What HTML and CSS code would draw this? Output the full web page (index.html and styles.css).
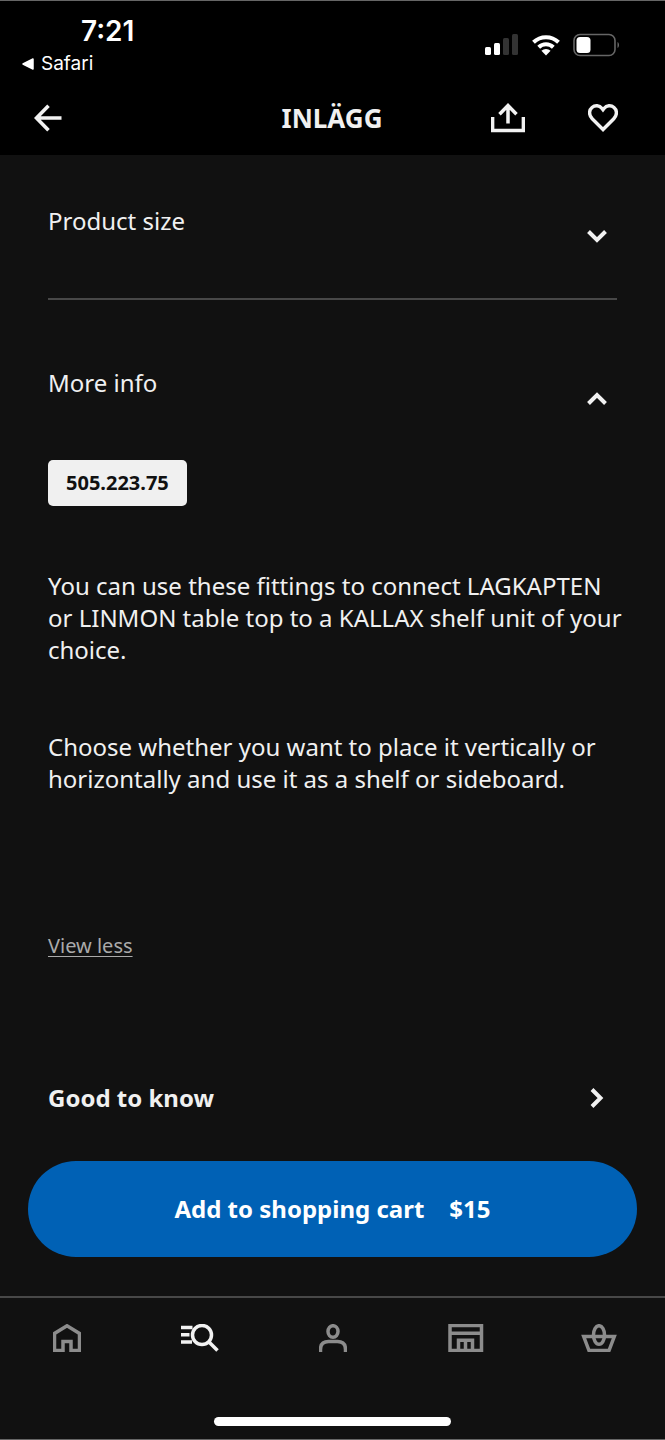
FILE: index.html
```html
<!DOCTYPE html>
<html lang="en">
<head>
<meta charset="utf-8">
<meta name="viewport" content="width=device-width, initial-scale=1">
<title>INLÄGG</title>
<link rel="stylesheet" href="styles.css">
</head>
<body>
<div class="app">
  <header class="top">
    <div class="status">
      <div class="status-left">
        <time class="clock">7:21</time>
        <a class="back-app" href="#">
          <svg width="12" height="12" viewBox="0 0 12 12" aria-hidden="true"><path d="M11 1v10L1 6z" fill="#fff" stroke="#fff" stroke-width="1.5" stroke-linejoin="round"/></svg>
          Safari
        </a>
      </div>
      <div class="status-icons" aria-hidden="true">
        <svg width="34" height="22" viewBox="0 0 34 22"><g fill="#fff"><rect x="0" y="13" width="6" height="8" rx="1.5"/><rect x="9" y="9" width="6" height="12" rx="1.5"/></g><g fill="#333"><rect x="18" y="4" width="6" height="17" rx="1.5"/><rect x="27" y="0" width="6" height="21" rx="1.5"/></g></svg>
        <svg width="28" height="22" viewBox="0 0 28 22"><g fill="none" stroke="#fff" stroke-width="4"><path d="M1.5 8.2a18 18 0 0 1 25 0"/><path d="M6.7 13.3a10.5 10.5 0 0 1 14.6 0"/></g><path d="M14 21.5l-4.6-4.7a7 7 0 0 1 9.2 0z" fill="#fff"/></svg>
        <svg width="47" height="24" viewBox="0 0 47 24"><rect x="1" y="1.500" width="41" height="21" rx="6" fill="none" stroke="#666" stroke-width="1.600"/><rect x="3.500" y="4" width="14" height="16" rx="3.500" fill="#fff"/><path d="M44.500 9c2 1 2 5 0 6z" fill="#666"/></svg>
      </div>
    </div>
    <nav class="bar">
      <button class="icon-btn" aria-label="Back"><svg width="28" height="28" viewBox="0 0 28 28"><path d="M27.500 14H3M14.500 1.800L2.500 14l12 12.200" fill="none" stroke="#f2f2f2" stroke-width="3.600"/></svg></button>
      <h1 class="title">INLÄGG</h1>
      <div class="bar-actions">
        <button class="icon-btn" aria-label="Share"><svg width="34" height="30" viewBox="0 0 34 30"><path d="M1.600 14v13.400h30.800V14M17 20.500V3M8.500 11.200L17 2.500l8.500 8.700" fill="none" stroke="#f2f2f2" stroke-width="3.500"/></svg></button>
        <button class="icon-btn" aria-label="Add to favourites"><svg width="30" height="28" viewBox="0 0 30 28"><path d="M15 25.500L4.200 14.800C.5 11 1 6 4 3.500c3-2.600 7.500-2.200 9.800.8L15 5.800l1.200-1.500c2.300-3 6.800-3.400 9.800-.8 3 2.500 3.500 7.500-.2 11.300z" fill="none" stroke="#f2f2f2" stroke-width="3.400"/></svg></button>
      </div>
    </nav>
  </header>

  <main class="content">
    <section class="panel divided">
      <button class="panel-head" aria-expanded="false"><span>Product size</span>
        <svg width="20" height="20" viewBox="0 0 20 20" aria-hidden="true"><path d="M1.500 5.500l8.500 8.500 8.500-8.500"/></svg></button>
    </section>
    <section class="panel open">
      <button class="panel-head" aria-expanded="true"><span>More info</span>
        <svg width="20" height="20" viewBox="0 0 20 20" aria-hidden="true"><path d="M1.500 15.500L10 7l8.500 8.500"/></svg></button>
      <div class="article-number">505.223.75</div>
      <div class="description">
        <p>You can use these fittings to connect LAGKAPTEN or LINMON table top to a KALLAX shelf unit of your choice.</p>
        <p>Choose whether you want to place it vertically or horizontally and use it as a shelf or sideboard.</p>
      </div>
      <button class="less">View less</button>
    </section>
    <a class="more" href="#"><span>Good to know</span>
      <svg width="20" height="20" viewBox="0 0 20 20" aria-hidden="true"><path d="M5 1.500l8.500 8.500L5 18.500"/></svg></a>
  </main>

  <footer class="bottom">
    <div class="buy"><button class="cart"><span>Add to shopping cart</span><span>$15</span></button></div>
    <nav class="tabs">
      <a href="#" aria-label="Home"><svg width="28" height="28" viewBox="0 0 28 28"><path d="M1.500 26.500V9.500L14 1.800l12.500 7.700v17H18v-9h-8v9z"/></svg></a>
      <a href="#" class="active" aria-label="Search" aria-current="page"><svg width="38" height="28" viewBox="0 0 38 28"><path d="M0 3.500h11.500M0 10.700h8.500M0 18h11"/><circle cx="21" cy="11" r="9.500"/><path d="M28 18l8.500 8.500"/></svg></a>
      <a href="#" aria-label="Profile"><svg width="28" height="28" viewBox="0 0 28 28"><ellipse cx="14" cy="7.500" rx="5" ry="5.800"/><path d="M1.500 28v-2.500q0-8 8-8h9q8 0 8 8V28"/></svg></a>
      <a href="#" aria-label="Store"><svg width="36" height="28" viewBox="0 0 36 28"><path d="M2 1.500h31.500v25H2zM2 9.200h31.500M10.500 26v-9.700h14V26M17.500 16v10"/></svg></a>
      <a href="#" aria-label="Shopping bag"><svg width="36" height="28" viewBox="0 0 36 28"><path d="M2.700 12.500h30.600l-5.300 14H8z"/><ellipse cx="18" cy="11" rx="5.500" ry="9.300"/></svg></a>
    </nav>
    <div class="home-indicator"></div>
  </footer>
</div>
</body>
</html>
```
FILE: styles.css
```css
* { box-sizing: border-box; }
body {
  margin: 0;
  background: #111;
  color: #f0f0f0;
  font-family: "Noto Sans", sans-serif;
  font-size: 24px;
  line-height: 32px;
}
button {
  margin: 0;
  padding: 0;
  border: 0;
  background: none;
  color: inherit;
  font: inherit;
  cursor: pointer;
}
a { color: inherit; text-decoration: none; }
svg { display: block; flex: none; }
h1, p { margin: 0; }

.app {
  display: flex;
  flex-direction: column;
  min-height: 100vh;
  border-top: 1px solid #666;
  border-bottom: 1px solid #666;
}

.top { background: #000; padding-bottom: 5px; }
.status {
  display: flex;
  justify-content: space-between;
  align-items: center;
  padding: 14px 45px 0 22px;
  color: #fff;
  font-family: Inter, sans-serif;
}
.status-left { display: flex; flex-direction: column; gap: 1px; }
.clock { padding-left: 59px; font-size: 28px; font-weight: 600; }
.back-app {
  display: flex;
  align-items: center;
  gap: 7px;
  font-size: 19px;
}
.status-icons { display: flex; align-items: center; gap: 13px; padding-bottom: 6px; }
.bar {
  display: grid;
  grid-template-columns: 1fr auto 1fr;
  align-items: center;
  height: 64px;
  margin-top: 6px;
  padding: 0 47px 0 34px;
}
.title { padding-left: 12px; font-size: 26px; font-weight: 700; }
.bar-actions { display: flex; justify-content: flex-end; gap: 63px; }
.icon-btn { justify-self: start; }

.content { flex: 1; padding: 0 48px; }
.panel { padding-top: 50px; }
.divided { padding-bottom: 31px; border-bottom: 2px solid #484848; }
.open { padding-top: 67px; }
.panel-head {
  display: flex;
  justify-content: space-between;
  align-items: center;
  width: 100%;
  height: 62px;
  padding-right: 10px;
  text-align: left;
}
.panel-head span { align-self: flex-start; }
.panel-head path, .more path { fill: none; stroke: #f2f2f2; stroke-width: 4; }
.article-number {
  width: fit-content;
  margin-top: 31px;
  padding: 7px 18px;
  border-radius: 5px;
  background: #f0f0f0;
  color: #111;
  font-size: 20px;
  font-weight: 700;
}
.description {
  display: grid;
  gap: 65px;
  margin: 64px -12px 0 0;
}
.less {
  display: block;
  margin-top: 135px;
  color: #aaa;
  font-size: 20px;
  text-decoration: underline;
  text-decoration-thickness: 1px;
  text-underline-offset: 3px;
}
.more {
  display: flex;
  justify-content: space-between;
  align-items: center;
  margin-top: 120px;
  padding-right: 10px;
  font-weight: 700;
}

.buy { padding: 0 28px 39px; }
.cart {
  display: flex;
  justify-content: center;
  align-items: center;
  gap: 25px;
  width: 100%;
  height: 96px;
  border-radius: 48px;
  background: #0061b5;
  color: #fff;
  font-weight: 700;
}
.tabs {
  display: grid;
  grid-template-columns: repeat(5, 1fr);
  justify-items: center;
  align-items: center;
  height: 82px;
  border-top: 2px solid #484848;
}
.tabs svg { fill: none; stroke: #8c8c8c; stroke-width: 3.5; }
.tabs .active svg { stroke: #f2f2f2; }
.home-indicator {
  width: 237px;
  height: 9px;
  margin: 39px auto 13px;
  border-radius: 5px;
  background: #fff;
}
```
